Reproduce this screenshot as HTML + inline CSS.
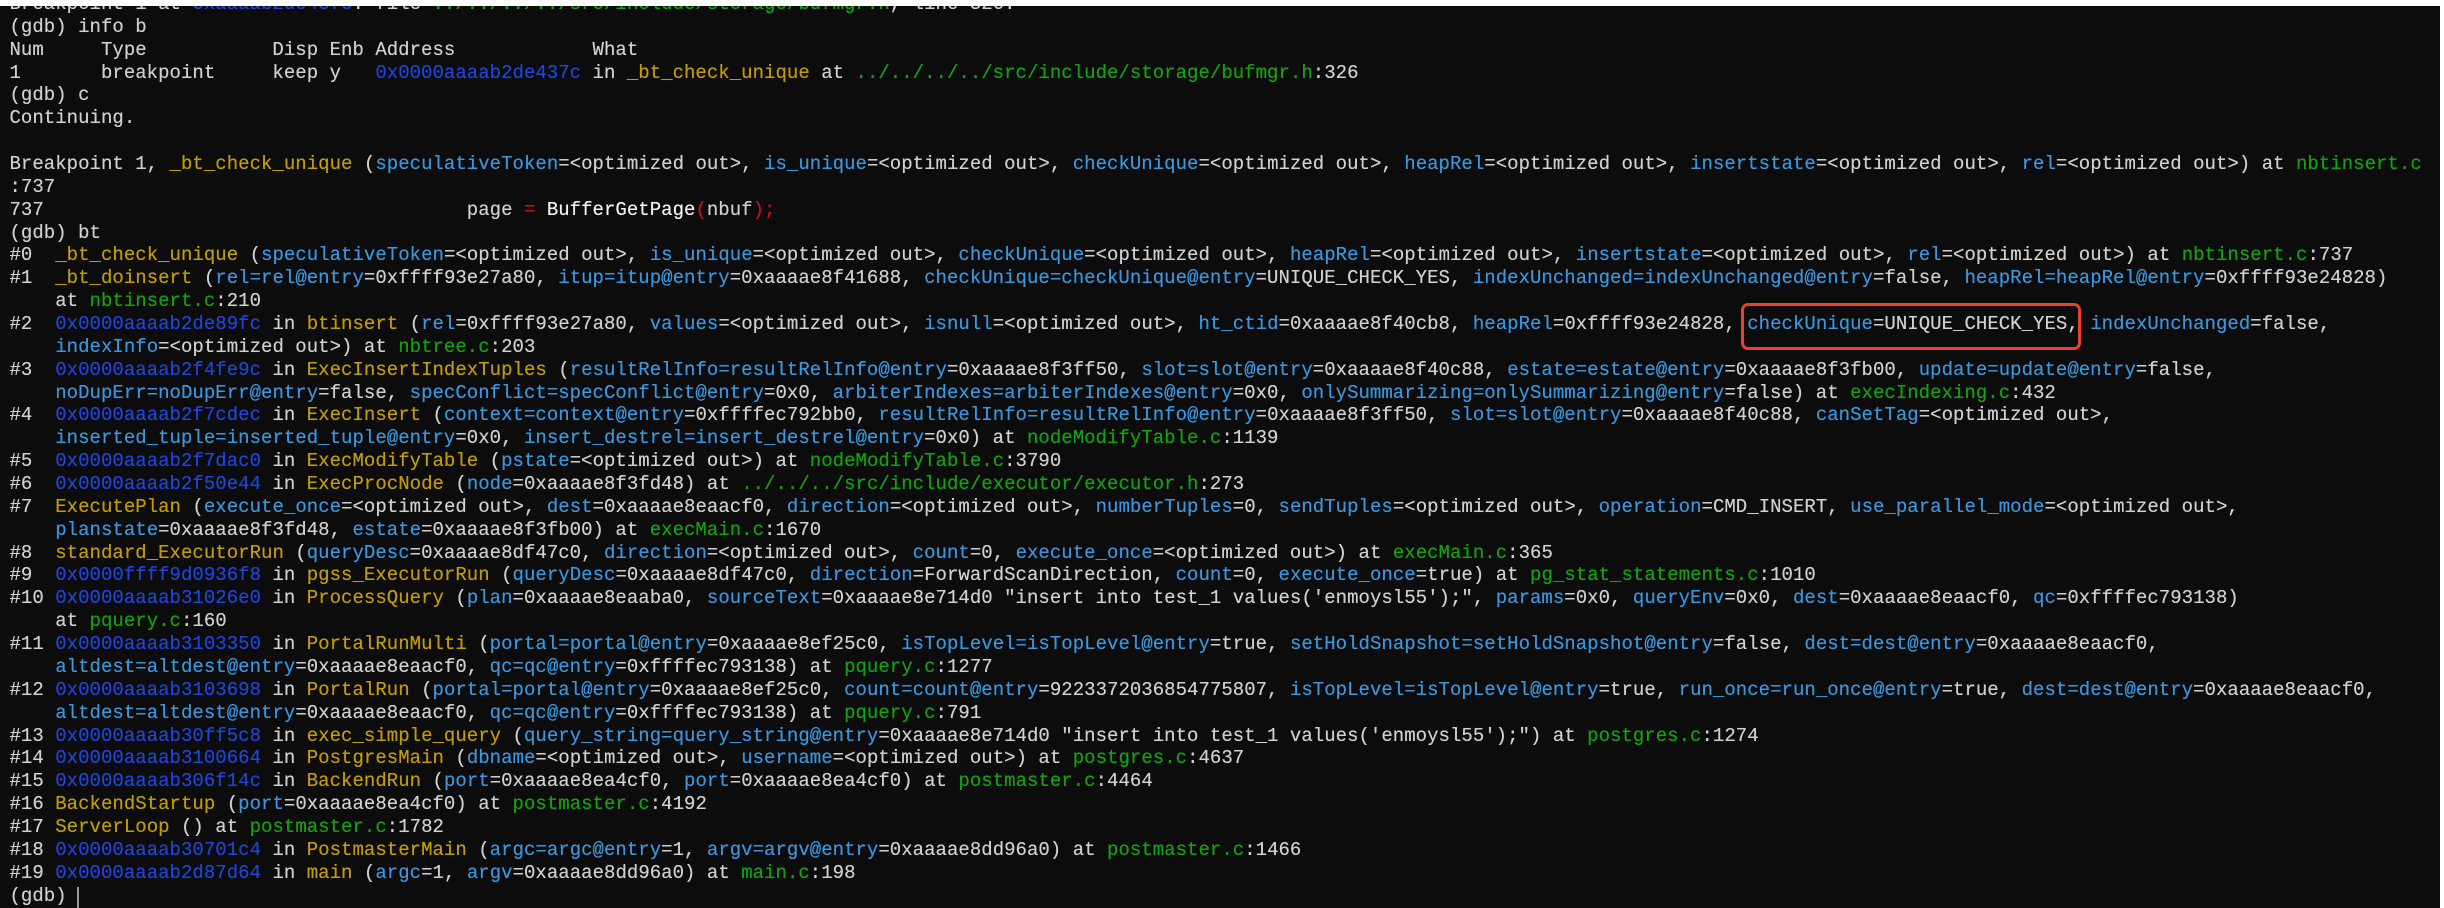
<!DOCTYPE html>
<html><head><meta charset="utf-8"><style>
html,body{margin:0;padding:0;background:#fff;width:2444px;height:908px;overflow:hidden}
#t{position:absolute;left:0;top:6px;width:2440px;height:902px;background:#0c0c0c;overflow:hidden}
pre{position:absolute;left:9.5px;top:-13px;margin:0;font-family:"Liberation Mono",monospace;font-size:19px;line-height:22.86px;color:#d0d0d0;letter-spacing:0.03px;text-shadow:0 0 0.4px currentColor}
.y{color:#c19c00}.b{color:#1f44d8}.c{color:#3a96dd}.g{color:#13a10e}.r{color:#c50f1f}.w{color:#f2f2f2}
#box{position:absolute;left:1741px;top:297px;width:334px;height:41px;border:3px solid #e8412c;border-radius:7px}
#cur{position:absolute;left:77px;top:881px;width:2px;height:24px;background:#9a9a9a}
</style></head><body><div id="t"><pre>Breakpoint 1 at <span class="b">0xaaaab2de437c</span>: file <span class="g">../../../../src/include/storage/bufmgr.h</span>, line 326.
(gdb) info b
Num     Type           Disp Enb Address            What
1       breakpoint     keep y   <span class="b">0x0000aaaab2de437c</span> in <span class="y">_bt_check_unique</span> at <span class="g">../../../../src/include/storage/bufmgr.h</span>:326
(gdb) c
Continuing.

Breakpoint 1, <span class="y">_bt_check_unique</span> (<span class="c">speculativeToken</span>=&lt;optimized out&gt;, <span class="c">is_unique</span>=&lt;optimized out&gt;, <span class="c">checkUnique</span>=&lt;optimized out&gt;, <span class="c">heapRel</span>=&lt;optimized out&gt;, <span class="c">insertstate</span>=&lt;optimized out&gt;, <span class="c">rel</span>=&lt;optimized out&gt;) at <span class="g">nbtinsert.c</span>
:737
737                                     page <span class="r">=</span> <span class="w">BufferGetPage</span><span class="r">(</span>nbuf<span class="r">);</span>
(gdb) bt
#0  <span class="y">_bt_check_unique</span> (<span class="c">speculativeToken</span>=&lt;optimized out&gt;, <span class="c">is_unique</span>=&lt;optimized out&gt;, <span class="c">checkUnique</span>=&lt;optimized out&gt;, <span class="c">heapRel</span>=&lt;optimized out&gt;, <span class="c">insertstate</span>=&lt;optimized out&gt;, <span class="c">rel</span>=&lt;optimized out&gt;) at <span class="g">nbtinsert.c</span>:737
#1  <span class="y">_bt_doinsert</span> (<span class="c">rel=rel@entry</span>=0xffff93e27a80, <span class="c">itup=itup@entry</span>=0xaaaae8f41688, <span class="c">checkUnique=checkUnique@entry</span>=UNIQUE_CHECK_YES, <span class="c">indexUnchanged=indexUnchanged@entry</span>=false, <span class="c">heapRel=heapRel@entry</span>=0xffff93e24828)
    at <span class="g">nbtinsert.c</span>:210
#2  <span class="b">0x0000aaaab2de89fc</span> in <span class="y">btinsert</span> (<span class="c">rel</span>=0xffff93e27a80, <span class="c">values</span>=&lt;optimized out&gt;, <span class="c">isnull</span>=&lt;optimized out&gt;, <span class="c">ht_ctid</span>=0xaaaae8f40cb8, <span class="c">heapRel</span>=0xffff93e24828, <span class="c">checkUnique</span>=UNIQUE_CHECK_YES, <span class="c">indexUnchanged</span>=false,
    <span class="c">indexInfo</span>=&lt;optimized out&gt;) at <span class="g">nbtree.c</span>:203
#3  <span class="b">0x0000aaaab2f4fe9c</span> in <span class="y">ExecInsertIndexTuples</span> (<span class="c">resultRelInfo=resultRelInfo@entry</span>=0xaaaae8f3ff50, <span class="c">slot=slot@entry</span>=0xaaaae8f40c88, <span class="c">estate=estate@entry</span>=0xaaaae8f3fb00, <span class="c">update=update@entry</span>=false,
    <span class="c">noDupErr=noDupErr@entry</span>=false, <span class="c">specConflict=specConflict@entry</span>=0x0, <span class="c">arbiterIndexes=arbiterIndexes@entry</span>=0x0, <span class="c">onlySummarizing=onlySummarizing@entry</span>=false) at <span class="g">execIndexing.c</span>:432
#4  <span class="b">0x0000aaaab2f7cdec</span> in <span class="y">ExecInsert</span> (<span class="c">context=context@entry</span>=0xffffec792bb0, <span class="c">resultRelInfo=resultRelInfo@entry</span>=0xaaaae8f3ff50, <span class="c">slot=slot@entry</span>=0xaaaae8f40c88, <span class="c">canSetTag</span>=&lt;optimized out&gt;,
    <span class="c">inserted_tuple=inserted_tuple@entry</span>=0x0, <span class="c">insert_destrel=insert_destrel@entry</span>=0x0) at <span class="g">nodeModifyTable.c</span>:1139
#5  <span class="b">0x0000aaaab2f7dac0</span> in <span class="y">ExecModifyTable</span> (<span class="c">pstate</span>=&lt;optimized out&gt;) at <span class="g">nodeModifyTable.c</span>:3790
#6  <span class="b">0x0000aaaab2f50e44</span> in <span class="y">ExecProcNode</span> (<span class="c">node</span>=0xaaaae8f3fd48) at <span class="g">../../../src/include/executor/executor.h</span>:273
#7  <span class="y">ExecutePlan</span> (<span class="c">execute_once</span>=&lt;optimized out&gt;, <span class="c">dest</span>=0xaaaae8eaacf0, <span class="c">direction</span>=&lt;optimized out&gt;, <span class="c">numberTuples</span>=0, <span class="c">sendTuples</span>=&lt;optimized out&gt;, <span class="c">operation</span>=CMD_INSERT, <span class="c">use_parallel_mode</span>=&lt;optimized out&gt;,
    <span class="c">planstate</span>=0xaaaae8f3fd48, <span class="c">estate</span>=0xaaaae8f3fb00) at <span class="g">execMain.c</span>:1670
#8  <span class="y">standard_ExecutorRun</span> (<span class="c">queryDesc</span>=0xaaaae8df47c0, <span class="c">direction</span>=&lt;optimized out&gt;, <span class="c">count</span>=0, <span class="c">execute_once</span>=&lt;optimized out&gt;) at <span class="g">execMain.c</span>:365
#9  <span class="b">0x0000ffff9d0936f8</span> in <span class="y">pgss_ExecutorRun</span> (<span class="c">queryDesc</span>=0xaaaae8df47c0, <span class="c">direction</span>=ForwardScanDirection, <span class="c">count</span>=0, <span class="c">execute_once</span>=true) at <span class="g">pg_stat_statements.c</span>:1010
#10 <span class="b">0x0000aaaab31026e0</span> in <span class="y">ProcessQuery</span> (<span class="c">plan</span>=0xaaaae8eaaba0, <span class="c">sourceText</span>=0xaaaae8e714d0 "insert into test_1 values('enmoysl55');", <span class="c">params</span>=0x0, <span class="c">queryEnv</span>=0x0, <span class="c">dest</span>=0xaaaae8eaacf0, <span class="c">qc</span>=0xffffec793138)
    at <span class="g">pquery.c</span>:160
#11 <span class="b">0x0000aaaab3103350</span> in <span class="y">PortalRunMulti</span> (<span class="c">portal=portal@entry</span>=0xaaaae8ef25c0, <span class="c">isTopLevel=isTopLevel@entry</span>=true, <span class="c">setHoldSnapshot=setHoldSnapshot@entry</span>=false, <span class="c">dest=dest@entry</span>=0xaaaae8eaacf0,
    <span class="c">altdest=altdest@entry</span>=0xaaaae8eaacf0, <span class="c">qc=qc@entry</span>=0xffffec793138) at <span class="g">pquery.c</span>:1277
#12 <span class="b">0x0000aaaab3103698</span> in <span class="y">PortalRun</span> (<span class="c">portal=portal@entry</span>=0xaaaae8ef25c0, <span class="c">count=count@entry</span>=9223372036854775807, <span class="c">isTopLevel=isTopLevel@entry</span>=true, <span class="c">run_once=run_once@entry</span>=true, <span class="c">dest=dest@entry</span>=0xaaaae8eaacf0,
    <span class="c">altdest=altdest@entry</span>=0xaaaae8eaacf0, <span class="c">qc=qc@entry</span>=0xffffec793138) at <span class="g">pquery.c</span>:791
#13 <span class="b">0x0000aaaab30ff5c8</span> in <span class="y">exec_simple_query</span> (<span class="c">query_string=query_string@entry</span>=0xaaaae8e714d0 "insert into test_1 values('enmoysl55');") at <span class="g">postgres.c</span>:1274
#14 <span class="b">0x0000aaaab3100664</span> in <span class="y">PostgresMain</span> (<span class="c">dbname</span>=&lt;optimized out&gt;, <span class="c">username</span>=&lt;optimized out&gt;) at <span class="g">postgres.c</span>:4637
#15 <span class="b">0x0000aaaab306f14c</span> in <span class="y">BackendRun</span> (<span class="c">port</span>=0xaaaae8ea4cf0, <span class="c">port</span>=0xaaaae8ea4cf0) at <span class="g">postmaster.c</span>:4464
#16 <span class="y">BackendStartup</span> (<span class="c">port</span>=0xaaaae8ea4cf0) at <span class="g">postmaster.c</span>:4192
#17 <span class="y">ServerLoop</span> () at <span class="g">postmaster.c</span>:1782
#18 <span class="b">0x0000aaaab30701c4</span> in <span class="y">PostmasterMain</span> (<span class="c">argc=argc@entry</span>=1, <span class="c">argv=argv@entry</span>=0xaaaae8dd96a0) at <span class="g">postmaster.c</span>:1466
#19 <span class="b">0x0000aaaab2d87d64</span> in <span class="y">main</span> (<span class="c">argc</span>=1, <span class="c">argv</span>=0xaaaae8dd96a0) at <span class="g">main.c</span>:198
(gdb) </pre><div id="box"></div><div id="cur"></div></div></body></html>
